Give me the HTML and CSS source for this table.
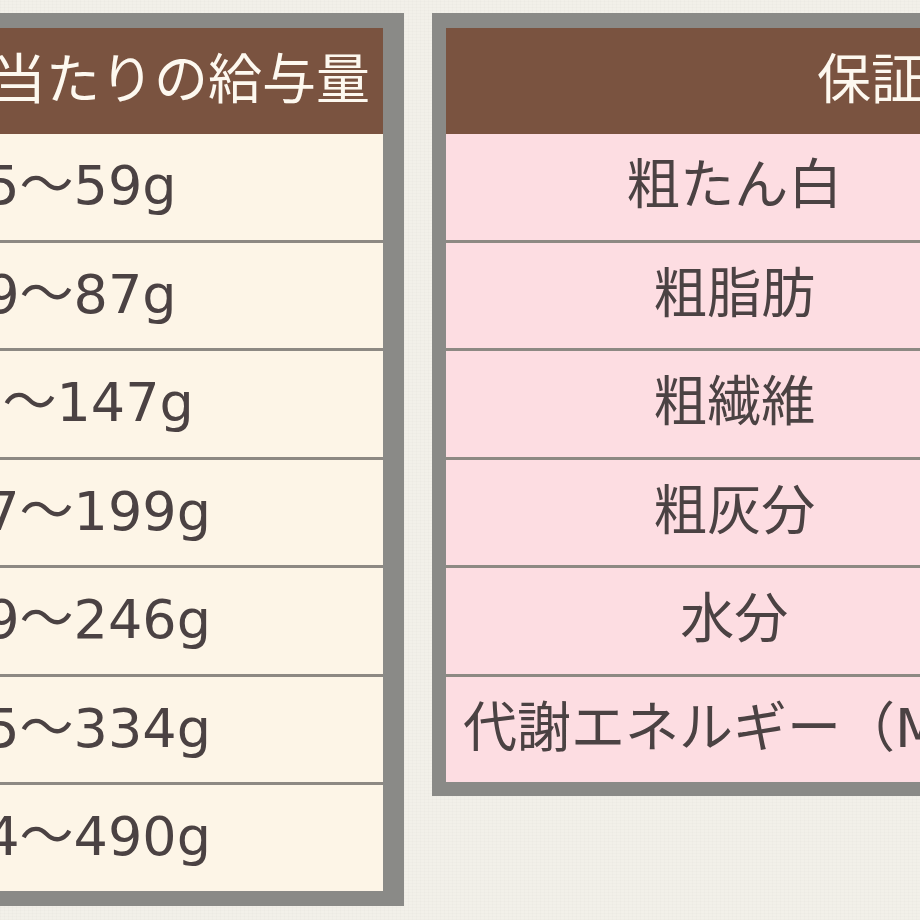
FILE: index.html
```html
<!DOCTYPE html>
<html lang="ja">
<head>
<meta charset="utf-8">
<title>給与量と保証成分値</title>
<link rel="stylesheet" href="styles.css">
</head>
<body>
<div class="stage">
  <div class="frame frame-left">
    <table class="tbl tbl-feed">
      <colgroup><col class="col-weight"><col class="col-amount"></colgroup>
      <thead>
        <tr><th>体重</th><th class="th-amount">体重1kg当たりの給与量</th></tr>
      </thead>
      <tbody>
        <tr><td>1kg</td><td>45～59g</td></tr>
        <tr><td>2kg</td><td>59～87g</td></tr>
        <tr><td>4kg</td><td>99～147g</td></tr>
        <tr><td>6kg</td><td>147～199g</td></tr>
        <tr><td>8kg</td><td>199～246g</td></tr>
        <tr><td>12kg</td><td>245～334g</td></tr>
        <tr><td>20kg</td><td>334～490g</td></tr>
      </tbody>
    </table>
  </div>
  <div class="frame frame-right">
    <table class="tbl tbl-spec">
      <colgroup><col class="col-name"><col class="col-value"></colgroup>
      <thead>
        <tr><th colspan="2">保証成分値</th></tr>
      </thead>
      <tbody>
        <tr><td>粗たん白</td><td>22.0％以上</td></tr>
        <tr><td>粗脂肪</td><td>8.0％以上</td></tr>
        <tr><td>粗繊維</td><td>4.0％以下</td></tr>
        <tr><td>粗灰分</td><td>9.0％以下</td></tr>
        <tr><td>水分</td><td>10.0％以下</td></tr>
        <tr><td class="td-long">代謝エネルギー（ME）</td><td>340kcal/100g</td></tr>
      </tbody>
    </table>
  </div>
</div>
</body>
</html>
```
FILE: styles.css
```css
html, body {
  margin: 0;
  padding: 0;
}
body {
  width: 920px;
  height: 920px;
  overflow: hidden;
  background-color: #f2f0e9;
  background-image:
    repeating-linear-gradient(0deg, rgba(0,0,0,0.012) 0 1px, transparent 1px 3px),
    repeating-linear-gradient(90deg, rgba(0,0,0,0.012) 0 1px, transparent 1px 4px);
  font-family: "DejaVu Sans", "Noto Sans CJK JP", sans-serif;
}
.stage {
  display: flex;
  align-items: flex-start;
  gap: 28px;
  padding-top: 13px;
  width: 920px;
  height: 920px;
  box-sizing: border-box;
  overflow: hidden;
}
.frame {
  flex-shrink: 0;
  background: #8a8a87;
}
.frame-left {
  margin-left: -551px;
  padding: 15px 21px 15px 14px;
}
.frame-right {
  padding: 15px 14px 14px 14px;
}
.tbl {
  border-collapse: collapse;
  table-layout: fixed;
  font-size: 54px;
  line-height: 1.2;
  color: #4b4243;
}
.tbl-feed { width: 920px; }
.tbl-spec { width: 1012px; }
.col-weight { width: 280px; }
.col-amount { width: 640px; }
.col-name { width: 578px; }
.col-value { width: 434px; }

.tbl th {
  height: 106px;
  padding: 0;
  background: #7a5340;
  color: #fdf8ef;
  font-weight: normal;
  text-align: center;
  white-space: nowrap;
}
.tbl .th-amount {
  text-align: right;
  padding-right: 13px;
}
.tbl td {
  height: 105.5px;
  padding: 0 17px;
  text-align: center;
  white-space: nowrap;
  vertical-align: middle;
}
.tbl tbody tr + tr td {
  border-top: 3px solid #8d8983;
}
.tbl-feed td {
  background: #fdf5e7;
}
.tbl-feed td + td {
  border-left: 3px solid #8d8983;
}
.tbl-spec td {
  background: #fddde2;
}
.tbl-spec td + td {
  border-left: 3px solid #8d8983;
}
```
